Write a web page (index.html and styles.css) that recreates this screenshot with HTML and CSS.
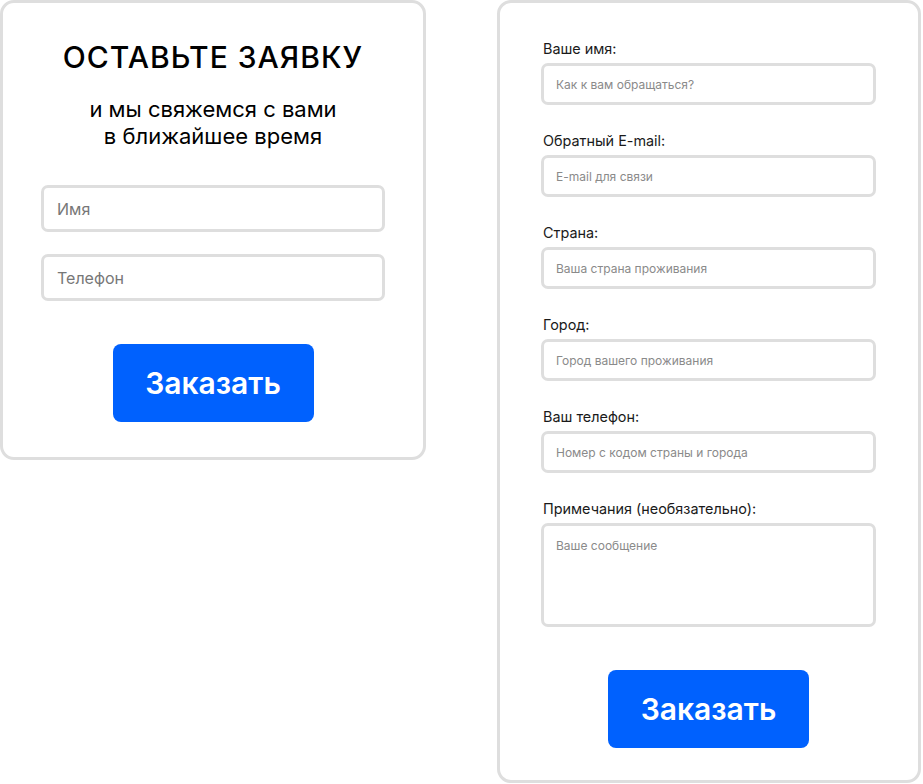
FILE: index.html
```html
<!DOCTYPE html>
<html lang="ru">
<head>
    <meta charset="utf-8">
    <title>Заявка</title>
    <link rel="stylesheet" href="styles.css">
</head>
<body>
<div class="page">
    <form class="card callback">
        <h1 class="callback-title">ОСТАВЬТЕ ЗАЯВКУ</h1>
        <p class="callback-text">и мы свяжемся с вами<br>в ближайшее время</p>
        <input class="field field-big" type="text" placeholder="Имя">
        <input class="field field-big" type="tel" placeholder="Телефон">
        <button class="btn" type="button">Заказать</button>
    </form>

    <form class="card order">
        <label class="row">
            <span class="label">Ваше имя:</span>
            <input class="field" type="text" placeholder="Как к вам обращаться?">
        </label>
        <label class="row">
            <span class="label">Обратный E-mail:</span>
            <input class="field" type="email" placeholder="E-mail для связи">
        </label>
        <label class="row">
            <span class="label">Страна:</span>
            <input class="field" type="text" placeholder="Ваша страна проживания">
        </label>
        <label class="row">
            <span class="label">Город:</span>
            <input class="field" type="text" placeholder="Город вашего проживания">
        </label>
        <label class="row">
            <span class="label">Ваш телефон:</span>
            <input class="field" type="tel" placeholder="Номер с кодом страны и города">
        </label>
        <label class="row">
            <span class="label">Примечания (необязательно):</span>
            <textarea class="field field-area" placeholder="Ваше сообщение"></textarea>
        </label>
        <button class="btn" type="button">Заказать</button>
    </form>
</div>
</body>
</html>
```

FILE: styles.css
```css
* {
    box-sizing: border-box;
}

body {
    margin: 0;
    background: #fff;
    font-family: Inter, "Noto Sans", sans-serif;
    color: #111;
}

.page {
    display: flex;
    align-items: flex-start;
    gap: 71px;
}

.card {
    display: flex;
    flex-direction: column;
    background: #fff;
    border: 3px solid #dedede;
    border-radius: 14px;
}

/* левая карточка */
.callback {
    width: 426px;
    padding: 36px 38px 35px;
    align-items: center;
}

.callback-title {
    margin: 0;
    font-size: 30px;
    line-height: 36px;
    font-weight: 500;
    letter-spacing: 1px;
    color: #000;
}

.callback-text {
    margin: 21px 0 0;
    font-size: 22px;
    line-height: 27px;
    text-align: center;
    color: #000;
}

.field {
    display: block;
    width: 100%;
    height: 42px;
    padding: 0 12px;
    border: 3px solid #dedede;
    border-radius: 7px;
    background: #fff;
    font-family: inherit;
    font-size: 12px;
    color: #222;
    outline: none;
}

.field::placeholder {
    color: #8a8a8a;
}

.field-big {
    height: 47px;
    padding: 0 13px;
    font-size: 16px;
}

.field-big::placeholder {
    color: #777;
}

.callback .field-big:first-of-type {
    margin-top: 35px;
}

.callback .field-big + .field-big {
    margin-top: 22px;
}

.btn {
    width: 201px;
    height: 78px;
    margin-top: 43px;
    border: none;
    border-radius: 8px;
    background: #0061fe;
    color: #fff;
    font-family: inherit;
    font-size: 30px;
    font-weight: 600;
    cursor: pointer;
}

.btn:hover {
    background: #0052d9;
}

/* правая карточка */
.order {
    width: 424px;
    padding: 37px 42px 32px 41px;
    align-items: center;
}

.row {
    display: flex;
    flex-direction: column;
    width: 100%;
    margin-bottom: 27px;
}

.row:last-of-type {
    margin-bottom: 0;
}

.label {
    margin: 0 0 6px 2px;
    font-size: 14.4px;
    line-height: 17px;
    color: #1a1a1a;
}

.field-area {
    height: 104px;
    padding: 12px 12px;
    resize: none;
    line-height: 16px;
}
```
